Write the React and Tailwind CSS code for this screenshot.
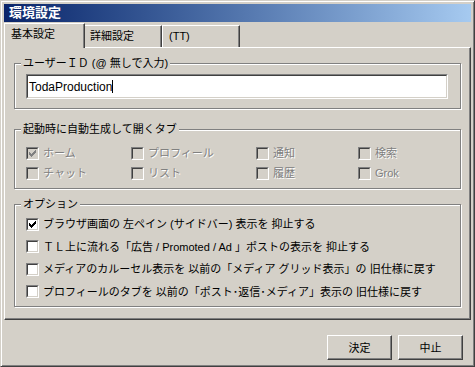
const CHECK = 'M6 0h1v1h-1z M5 1h2v1h-2z M0 2h1v1h-1z M4 2h3v1h-3z M0 3h2v1h-2z M3 3h3v1h-3z M0 4h5v1h-5z M1 5h3v1h-3z M2 6h1v1h-1z'

function CheckBox({ checked, disabled }) {
  return (
    <span className="flex-none w-[13px] h-[13px] border border-t-[#808080] border-l-[#808080] border-r-white border-b-white">
      <span
        className={
          disabled
            ? 'flex items-center justify-center w-full h-full border border-t-[#404040] border-l-[#404040] border-r-[#d4d0c8] border-b-[#d4d0c8] bg-[#d4d0c8]'
            : 'flex items-center justify-center w-full h-full border border-t-[#404040] border-l-[#404040] border-r-[#d4d0c8] border-b-[#d4d0c8] bg-white'
        }
      >
        {checked && (
          <svg width="7" height="7" viewBox="0 0 7 7" shapeRendering="crispEdges" className="ml-[-1px]">
            <path d={CHECK} fill={disabled ? '#808080' : '#000'} />
          </svg>
        )}
      </span>
    </span>
  )
}

function Group({ title, className, children }) {
  return (
    <fieldset
      className={
        'border border-[#808080] shadow-[inset_1px_1px_0_#fff,1px_1px_0_#fff] ' + className
      }
    >
      <legend className="ml-[6px] px-[2px] bg-[#d4d0c8] text-[11px] leading-[15px] text-black">
        {title}
      </legend>
      {children}
    </fieldset>
  )
}

const startTabs = [
  ['ホーム', true],
  ['プロフィール', false],
  ['通知', false],
  ['検索', false],
  ['チャット', false],
  ['リスト', false],
  ['履歴', false],
  ['Grok', false],
]

const options = [
  ['ブラウザ画面の 左ペイン (サイドバー) 表示を 抑止する', true],
  ['ＴＬ上に流れる「広告 / Promoted / Ad 」ポストの表示を 抑止する', false],
  ['メディアのカルーセル表示を 以前の「メディア グリッド表示」の 旧仕様に戻す', false],
  ['プロフィールのタブを 以前の「ポスト･返信･メディア」表示の 旧仕様に戻す', false],
]

export default function App() {
  return (
    <div className="w-[475px] h-[367px] p-[2px] bg-[#d4d0c8] border border-t-[#d4d0c8] border-l-[#d4d0c8] border-r-[#404040] border-b-[#404040] shadow-[inset_1px_1px_0_#fff,inset_-1px_-1px_0_#808080] font-['Liberation_Sans','Noto_Sans_CJK_JP',sans-serif] text-black">
      {/* title bar */}
      <div className="h-[18px] ml-[1px] mt-[1px] mr-[1px] bg-linear-to-r from-[#0a246a] to-[#a6caf0] pl-[5px] text-[13px] leading-[18px] font-bold text-white">
        環境設定
      </div>

      {/* tabs */}
      <div className="flex items-end mt-[1px] ml-[1px] h-[24px]">
        <div className="relative z-10 w-[81px] h-[25px] mb-[-1px] bg-[#d4d0c8] border-t border-l border-r border-t-white border-l-white border-r-[#404040] shadow-[inset_-1px_0_0_#808080] pl-[6px] pt-[3px] text-[11px] leading-[15px]">
          基本設定
        </div>
        <div className="w-[77px] h-[22px] border-t border-r border-t-white border-r-[#404040] shadow-[inset_-1px_0_0_#808080] pl-[5px] pt-[3px] text-[11px] leading-[15px]">
          詳細設定
        </div>
        <div className="w-[78px] h-[22px] border-t border-l border-r border-t-white border-l-white border-r-[#404040] shadow-[inset_-1px_0_0_#808080] pl-[6px] pt-[3px] text-[11px] leading-[15px]">
          (TT)
        </div>
      </div>

      {/* tab panel */}
      <div className="ml-[1px] mr-[1px] h-[273px] flex flex-col px-[9px] pt-[8px] border border-t-white border-l-white border-r-[#404040] border-b-[#404040] shadow-[inset_-1px_-1px_0_#808080]">
        <Group title="ユーザーＩＤ (@ 無しで入力)" className="pb-[9px]">
          <div className="mt-[3px] ml-[11px] w-[422px] h-[25px] flex items-center bg-white border border-t-[#808080] border-l-[#808080] border-r-white border-b-white">
            <div className="flex items-center w-full h-full border border-t-[#404040] border-l-[#404040] border-r-[#d4d0c8] border-b-[#d4d0c8] pl-[1px] text-[12px] leading-[14px]">
              <span>TodaProduction</span>
              <span className="w-px h-[13px] bg-black" />
            </div>
          </div>
        </Group>

        <Group title="起動時に自動生成して開くタブ" className="mt-[13px] pb-[5px]">
          <div className="mt-[6px] pl-[11px] grid grid-cols-[105px_125px_102px_auto]">
            {startTabs.map(([label, checked]) => (
              <div key={label} className="h-[20px] flex items-center gap-[4px]">
                <CheckBox checked={checked} disabled />
                <span className="text-[11px] leading-[14px] text-[#808080] [text-shadow:1px_1px_0_#fff]">
                  {label}
                </span>
              </div>
            ))}
          </div>
        </Group>

        <Group title="オプション" className="mt-[8px] pb-[3px]">
          <div className="mt-[1px] pl-[11px] flex flex-col">
            {options.map(([label, checked]) => (
              <div key={label} className="h-[22.5px] flex items-center gap-[4px]">
                <CheckBox checked={checked} />
                <span className="text-[11px] leading-[14px] whitespace-nowrap">{label}</span>
              </div>
            ))}
          </div>
        </Group>
      </div>

      {/* buttons */}
      <div className="flex justify-end gap-[6px] mt-[15px] pr-[9px]">
        <button className="w-[65px] h-[25px] bg-[#d4d0c8] border border-t-white border-l-white border-r-[#404040] border-b-[#404040] shadow-[inset_-1px_-1px_0_#808080] text-[11px] leading-[14px]">
          決定
        </button>
        <button className="w-[65px] h-[25px] bg-[#d4d0c8] border border-t-white border-l-white border-r-[#404040] border-b-[#404040] shadow-[inset_-1px_-1px_0_#808080] text-[11px] leading-[14px]">
          中止
        </button>
      </div>
    </div>
  )
}
